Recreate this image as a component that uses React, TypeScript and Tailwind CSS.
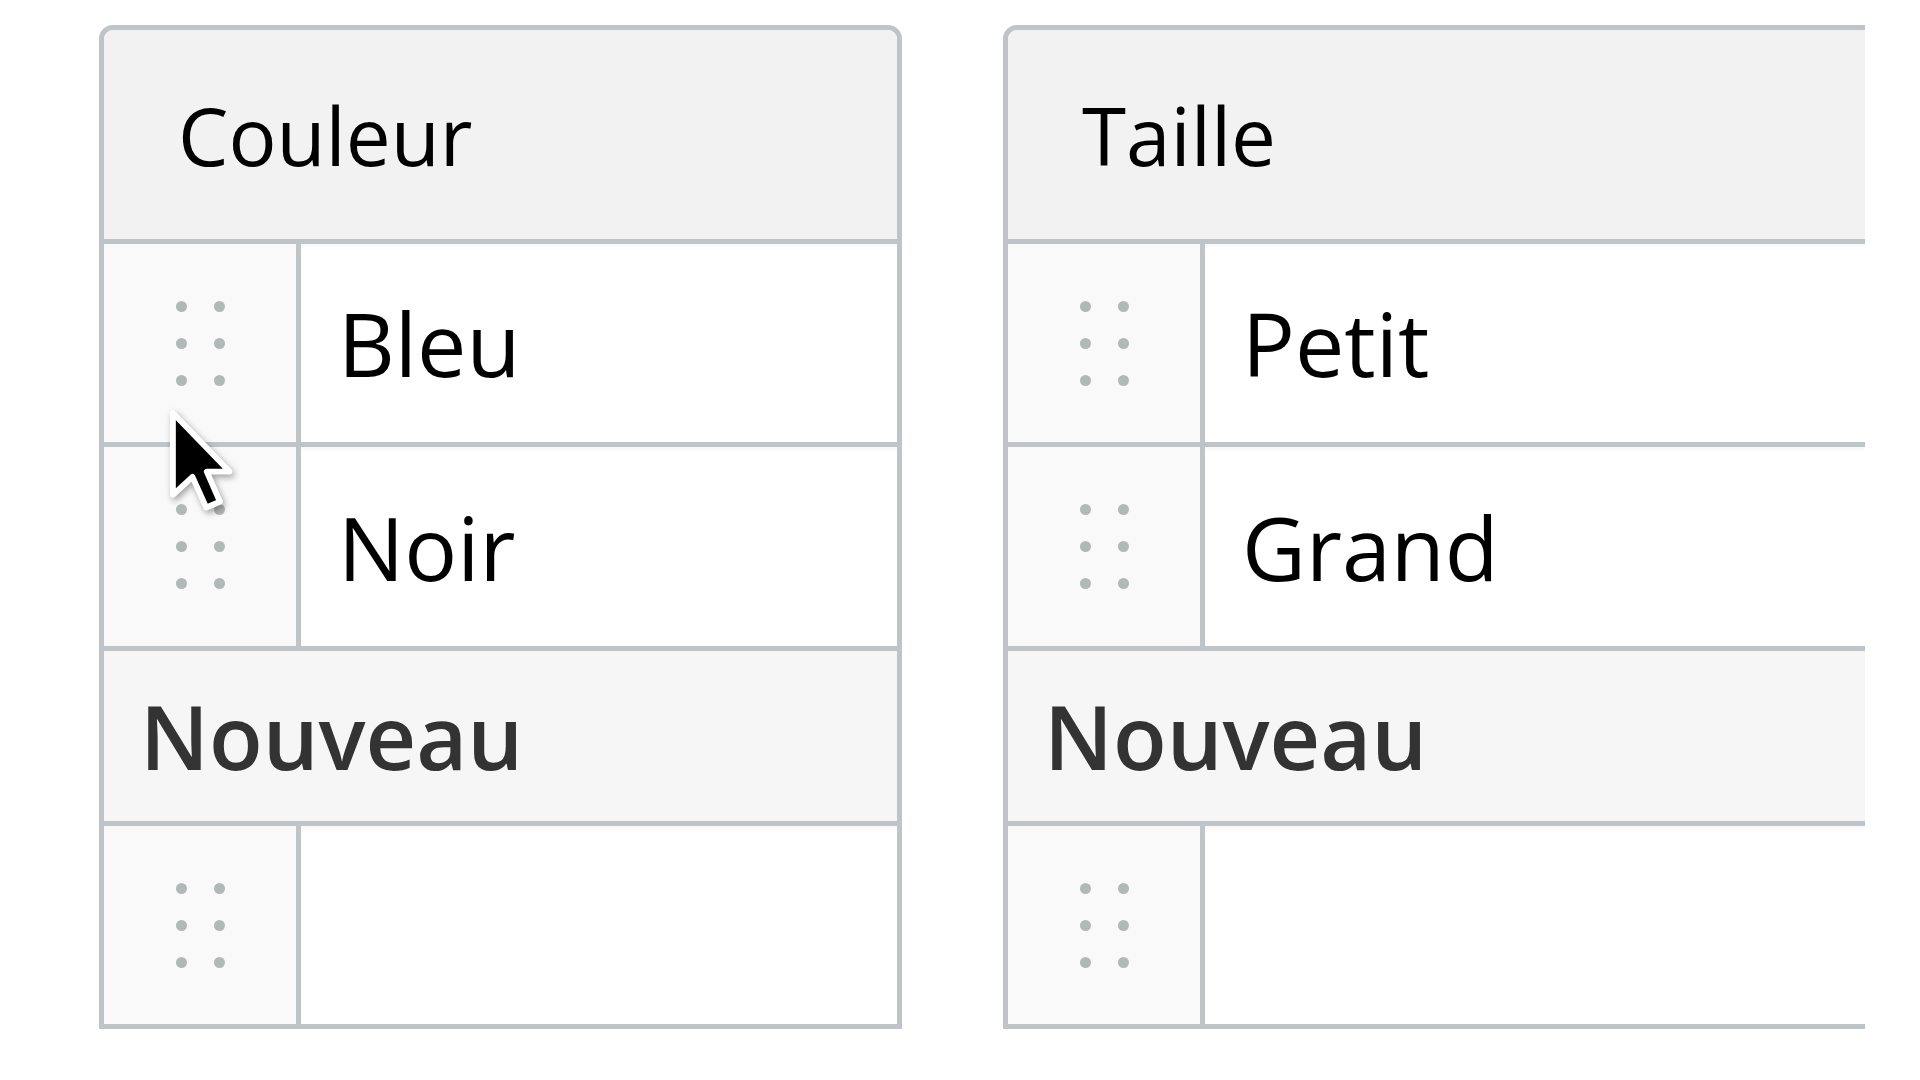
import React from "react";

type Attribute = {
  name: string;
  values: string[];
};

const attributes: Attribute[] = [
  { name: "Couleur", values: ["Bleu", "Noir"] },
  { name: "Taille", values: ["Petit", "Grand"] },
];

function DragHandle() {
  return (
    <div className="grid grid-cols-2 gap-x-[27px] gap-y-[26px]">
      {Array.from({ length: 6 }).map((_, i) => (
        <span key={i} className="block h-[11px] w-[11px] rounded-full bg-[#b2b7b7]" />
      ))}
    </div>
  );
}

function ValueRow({ value, height }: { value: string; height: string }) {
  return (
    <div className={`flex border-b-[5px] border-[#bec4c7] ${height}`}>
      <div className="flex w-[197px] shrink-0 items-center justify-center border-r-[5px] border-[#bec4c7] bg-[#f9f9fa]">
        <DragHandle />
      </div>
      <div className="flex flex-1 items-center bg-white pl-[37px] text-[88px] leading-none text-black shadow-[inset_0_8px_8px_-8px_rgba(0,0,0,0.06)]">
        {value}
      </div>
    </div>
  );
}

function AttributePanel({ attr, width }: { attr: Attribute; width: string }) {
  return (
    <div className={`shrink-0 rounded-t-[14px] border-[5px] border-[#bec4c7] ${width}`}>
      {/* en-tête */}
      <div className="flex h-[214px] items-center rounded-t-[9px] border-b-[5px] border-[#bec4c7] bg-[#f2f2f3] pl-[74px] text-[80px] leading-none text-black">
        {attr.name}
      </div>

      <ValueRow value={attr.values[0]} height="h-[203px]" />
      <ValueRow value={attr.values[1]} height="h-[204px]" />

      {/* nouvelle valeur */}
      <div className="flex h-[175px] items-center border-b-[5px] border-[#bec4c7] bg-[#f6f6f7] pl-[36px] text-[88px] font-semibold leading-none text-[#333333]">
        Nouveau
      </div>

      <div className="flex h-[198px]">
        <div className="flex w-[197px] shrink-0 items-center justify-center border-r-[5px] border-[#bec4c7] bg-[#f9f9fa]">
          <DragHandle />
        </div>
        <div className="flex-1 bg-white shadow-[inset_0_8px_8px_-8px_rgba(0,0,0,0.06)]" />
      </div>
    </div>
  );
}

function Cursor() {
  return (
    <svg
      className="pointer-events-none absolute left-[165px] top-[405px] drop-shadow-[2px_3px_3px_rgba(0,0,0,0.35)]"
      width="74"
      height="111"
      viewBox="0 0 14 21"
    >
      <path
        d="M1.5 1.5 V17 L5.2 13.6 L7.8 19.4 L10.4 18.3 L7.9 12.6 L12.2 12.6 Z"
        fill="#000"
        stroke="#fff"
        strokeWidth="1.1"
        strokeLinejoin="round"
      />
    </svg>
  );
}

export default function App() {
  return (
    <div
      className="relative h-[1080px] w-[1920px] overflow-hidden bg-white pl-[99px] pt-[25px]"
      style={{ fontFamily: '"Open Sans", "Noto Sans", sans-serif' }}
    >
      <div className="flex w-[1766px] gap-[101px] overflow-hidden">
        <AttributePanel attr={attributes[0]} width="w-[803px]" />
        <AttributePanel attr={attributes[1]} width="w-[1000px]" />
      </div>
      <Cursor />
    </div>
  );
}
